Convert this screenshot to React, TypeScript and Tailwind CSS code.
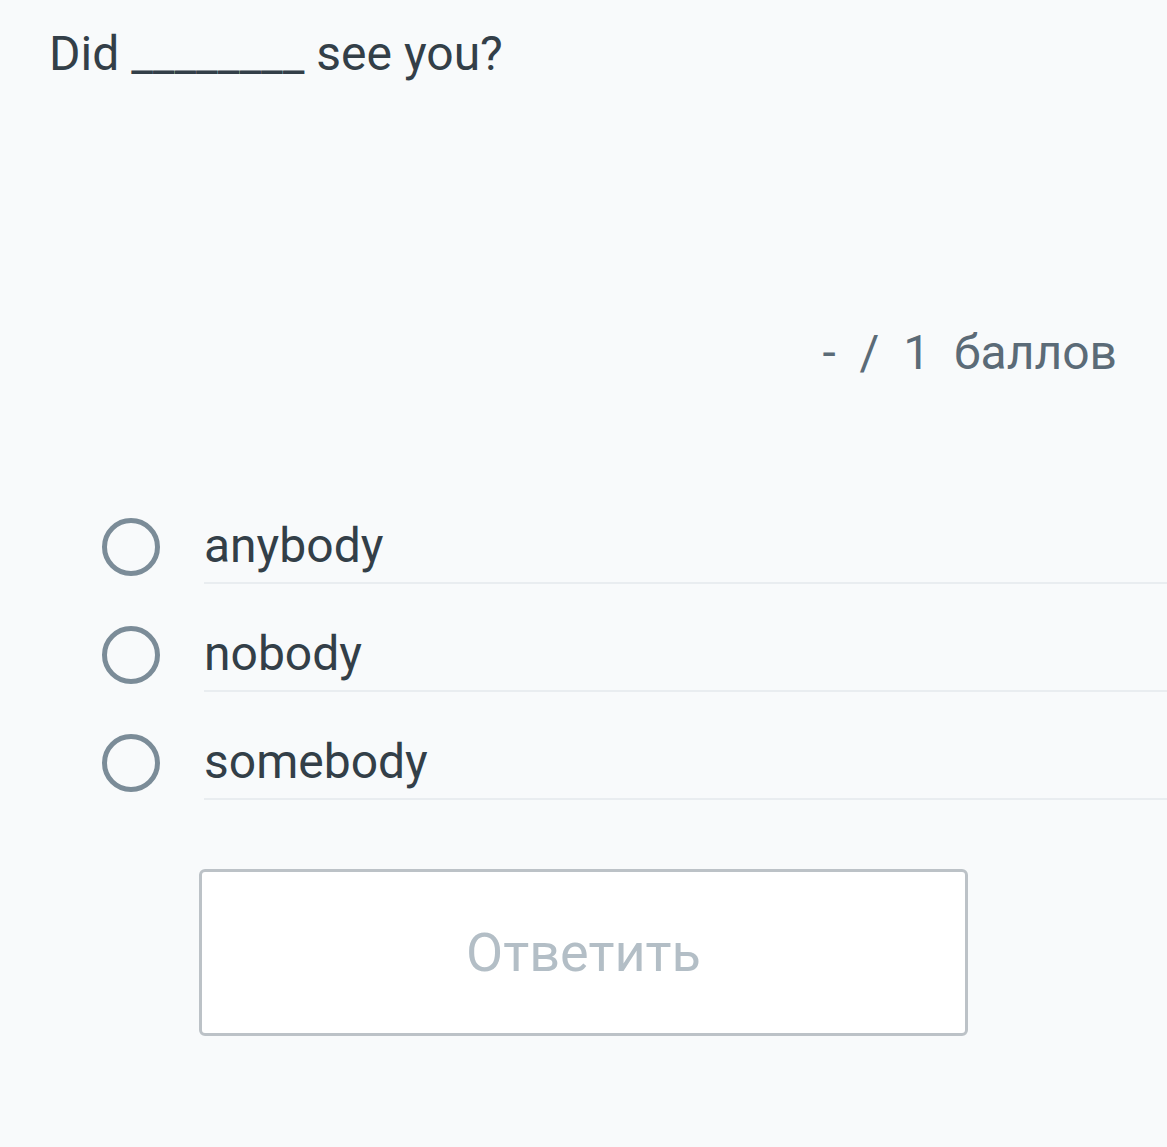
import React from "react";

const options = ["anybody", "nobody", "somebody"];

const App: React.FC = () => {
  return (
    <div className="min-h-screen w-full bg-[#f8fafb] font-['Roboto',sans-serif] text-[#333f48]">
      <div className="pl-[49px] pt-[24px]">
        <h1 className="text-[48px] leading-[60px]">Did ________ see you?</h1>
      </div>
      <div className="mt-[241px] flex justify-end pr-[50px]">
        <span className="text-[48px] leading-[56px] text-[#5b6b77] whitespace-pre">-  /  1  баллов</span>
      </div>
      <div className="mt-[138px] flex flex-col">
        {options.map((o) => (
          <label key={o} className="flex h-[108px] items-start pl-[102px]">
            <span className="mt-[-1px] h-[58px] w-[58px] shrink-0 rounded-full border-[5px] border-[#7b8c98]" />
            <div className="ml-[44px] mt-[-3px] h-fit flex-1 border-b-2 border-[#e9edf0] pb-[6px]">
              <span className="block text-[48px] leading-[60px] text-[#333f48]">{o}</span>
            </div>
          </label>
        ))}
      </div>
      <div className="mt-[26px] pl-[199px]">
        <button className="h-[167px] w-[769px] rounded-[6px] border-[3px] border-[#bcc2c7] bg-white text-[54px] text-[#b3bec6]">
          Ответить
        </button>
      </div>
    </div>
  );
};

export default App;
